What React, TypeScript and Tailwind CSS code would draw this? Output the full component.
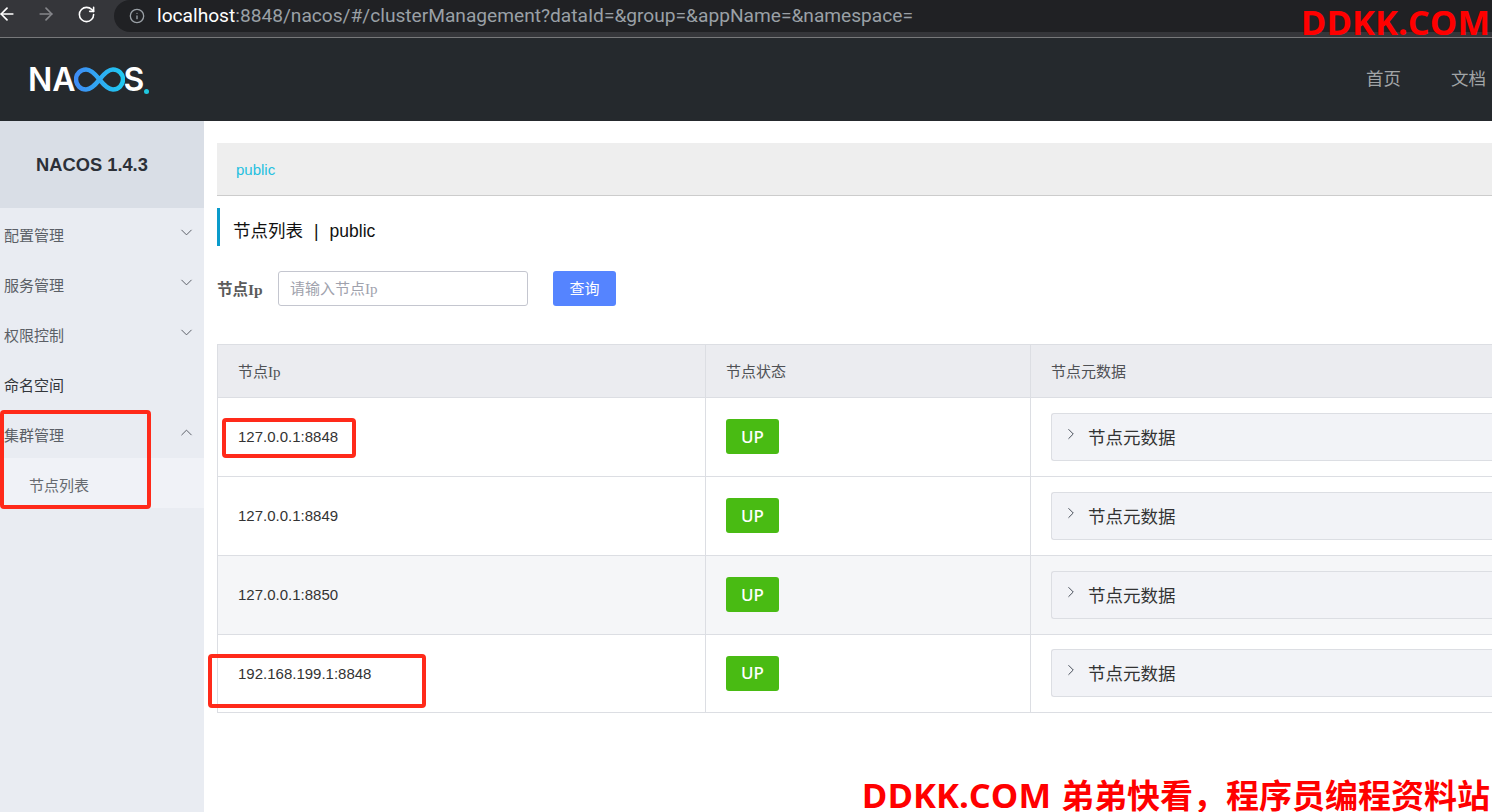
import React from 'react';
import { ArrowLeft, ArrowRight, RotateCw, Info, ChevronDown, ChevronUp, ChevronRight } from 'lucide-react';

const cjk = "font-['Liberation_Sans','Noto_Sans_CJK_SC',sans-serif]";

const MENU = [
  { label: '配置管理', icon: 'down' },
  { label: '服务管理', icon: 'down' },
  { label: '权限控制', icon: 'down' },
  { label: '命名空间', icon: '' },
  { label: '集群管理', icon: 'up' },
];

const NODES = ['127.0.0.1:8848', '127.0.0.1:8849', '127.0.0.1:8850', '192.168.199.1:8848'];

const Logo = () => (
  <div className="flex items-center ml-[28px] font-['Inter',sans-serif] font-semibold text-[32px] leading-none text-white">
    <span>NA</span>
    <svg width="51" height="25" viewBox="0 0 51 25" fill="none" className="-ml-[2px]">
      <defs>
        <linearGradient id="inf" x1="0" y1="0" x2="1" y2="0">
          <stop offset="0" stopColor="#3f8cf5" />
          <stop offset="1" stopColor="#1fc8f0" />
        </linearGradient>
      </defs>
      <path
        d="M25.5 12.5C20 5.5 16 2.5 12 2.5A10 10 0 0 0 12 22.5C16 22.5 20 19.5 25.5 12.5C31 5.5 35 2.5 39 2.5A10 10 0 0 1 39 22.5C35 22.5 31 19.5 25.5 12.5Z"
        stroke="url(#inf)"
        strokeWidth="4.5"
      />
    </svg>
    <span className="-ml-[1px]">S</span>
    <span className="self-end w-[5px] h-[5px] mb-[2px] rounded-full bg-[#1fc8e0]" />
  </div>
);

const BrowserBar = () => (
  <div className="h-[38px] shrink-0 flex bg-[#35363a] border-b border-[#77787a]">
    <div className="w-[114px] flex items-center h-[28px] text-white">
      <ArrowLeft size={20} strokeWidth={2} className="-ml-[3px]" />
      <ArrowRight size={20} strokeWidth={2} className="ml-[19px] text-[#85868a]" />
      <RotateCw size={19} strokeWidth={2} className="ml-[21px]" />
    </div>
    <div className="flex-1 h-[32px] rounded-l-[16px] bg-[#202124] flex items-center pl-[15px] font-['Roboto',sans-serif] text-[19.15px]">
      <Info size={16} className="text-[#9aa0a6]" />
      <span className="ml-[12px] text-white">localhost</span>
      <span className="text-[#9aa0a6]">:8848/nacos/#/clusterManagement?dataId=&amp;group=&amp;appName=&amp;namespace=</span>
    </div>
  </div>
);

const Sidebar = () => (
  <aside className="w-[204px] shrink-0 bg-[#e9ecf2]">
    <div className="h-[87px] bg-[#d9dee6] flex items-center justify-center pr-[20px] pt-[1px] font-bold text-[18.3px] text-[#2c3038]">
      NACOS 1.4.3
    </div>
    <div>
      {MENU.map((item) => (
        <div key={item.label} className="h-[50px] pt-[6px] flex items-center justify-between pl-[4px] pr-[8px] text-[15px] text-[#5b5f66]">
          <span className={item.icon === '' ? 'text-[#33363b]' : ''}>{item.label}</span>
          {item.icon === 'down' && <ChevronDown size={19} strokeWidth={1.2} className="-mt-[7px] text-[#555a62]" />}
          {item.icon === 'up' && <ChevronUp size={19} strokeWidth={1.2} className="-mt-[7px] text-[#555a62]" />}
        </div>
      ))}
      <div className="h-[50px] pt-[6px] flex items-center pl-[29px] bg-[#f0f2f7] text-[15px] text-[#666a70]">节点列表</div>
    </div>
  </aside>
);

const NodeRow = ({ ip, striped, last }: { ip: string; striped: boolean; last: boolean }) => (
  <div className={`grid grid-cols-[487px_325px_1fr] border-b border-[#dcdee3] ${last ? 'h-[78px]' : 'h-[79px]'} ${striped ? 'bg-[#f5f6f8]' : 'bg-white'}`}>
    <div className="flex items-center pl-[20px] pt-[1px] text-[15px] text-[#333]">{ip}</div>
    <div className="flex items-center pl-[20px] pb-[1px] border-l border-[#dcdee3]">
      <span className="w-[53px] h-[35px] rounded-[3px] bg-[#49bb13] text-white text-[17px] font-['Noto_Sans',sans-serif] font-medium flex items-center justify-center">UP</span>
    </div>
    <div className="flex items-center pl-[20px] pb-[1px] border-l border-[#dcdee3]">
      <div className="w-full h-[48px] rounded-l-[3px] border border-r-0 border-[#dcdee3] bg-[#f2f3f7] flex items-center pl-[10px] text-[17.5px] text-[#333]">
        <ChevronRight size={18} strokeWidth={1.3} className="-mt-[6px] text-[#444a55]" />
        <span className="ml-[8px] pt-[3px]">节点元数据</span>
      </div>
    </div>
  </div>
);

export default function App() {
  return (
    <div className={`relative w-screen h-screen overflow-hidden flex flex-col bg-white ${cjk}`}>
      <BrowserBar />

      <header className="h-[83px] shrink-0 bg-[#25292d] flex items-center justify-between">
        <Logo />
        <nav className="flex gap-[50px] mr-[6px] text-[17.5px] text-[#a1a4a6]">
          <span>首页</span>
          <span>文档</span>
        </nav>
      </header>

      <div className="flex-1 flex min-h-0">
        <Sidebar />
        <main className="flex-1 min-w-0 pl-[13px] pt-[22px]">
          <div className="h-[53px] bg-[#eeeeee] border-b border-[#cccccc] flex items-center pl-[19px] pt-[3px] text-[15px] text-[#1fc0e0]">public</div>

          <div className="mt-[12px] h-[38px] border-l-[3px] border-[#0a9bcb] pl-[13px] pt-[9px] flex items-center text-[17.5px] text-[#111]">
            <span>节点列表</span>
            <span className="ml-[11px] mr-[11px]">|</span>
            <span>public</span>
          </div>

          <div className="mt-[25px] flex items-center">
            <span className="w-[61px] pt-[2px] text-[15.5px] font-bold text-[#5c5c5c] font-['Liberation_Serif','Noto_Sans_CJK_SC',serif]">节点Ip</span>
            <div className="w-[250px] h-[35px] rounded-[3px] border border-[#c4c6cf] flex items-center pl-[11px] pt-[2px] text-[15px] text-[#a0a2ad] font-['Liberation_Serif','Noto_Sans_CJK_SC',serif]">请输入节点Ip</div>
            <button className="ml-[25px] w-[63px] h-[35px] pt-[2px] rounded-[3px] bg-[#5584ff] text-white text-[15px]">查询</button>
          </div>

          <div className="mt-[38px] border-t border-l border-[#dcdee3]">
            <div className="grid grid-cols-[487px_325px_1fr] h-[53px] border-b border-[#dcdee3] bg-[#ebecf0] text-[15px] text-[#4f5155]">
              <div className="flex items-center pl-[20px] pt-[2px] font-['Liberation_Serif','Noto_Sans_CJK_SC',serif]">节点Ip</div>
              <div className="flex items-center pl-[20px] pt-[2px] border-l border-[#dcdee3]">节点状态</div>
              <div className="flex items-center pl-[20px] pt-[2px] border-l border-[#dcdee3]">节点元数据</div>
            </div>
            {NODES.map((ip, i) => (
              <NodeRow key={ip} ip={ip} striped={i === 2} last={i === 3} />
            ))}
          </div>
        </main>
      </div>

      {/* red annotations drawn over the screenshot */}
      <div className="absolute left-0 top-[410px] w-[151px] h-[99px] rounded-[4px] border-[4px] border-[#ff2a1a]" />
      <div className="absolute left-[222px] top-[418px] w-[134px] h-[40px] rounded-[4px] border-[4px] border-[#ff2a1a]" />
      <div className="absolute left-[208px] top-[654px] w-[218px] h-[54px] rounded-[4px] border-[4px] border-[#ff2a1a]" />

      {/* watermarks */}
      <div className="absolute right-[2px] top-[7px] text-[34.6px] leading-[30px] font-bold text-[#ff0000] font-['Open_Sans',sans-serif]">DDKK.COM</div>
      <div className="absolute right-[2px] -bottom-[1px] leading-[22px] font-bold text-[#ff0000] whitespace-nowrap font-['Open_Sans','Noto_Sans_CJK_SC',sans-serif]">
        <span className="text-[34.6px]">DDKK.COM</span>
        <span className="text-[33px] ml-[10px]">弟弟快看，程序员编程资料站</span>
      </div>
    </div>
  );
}
